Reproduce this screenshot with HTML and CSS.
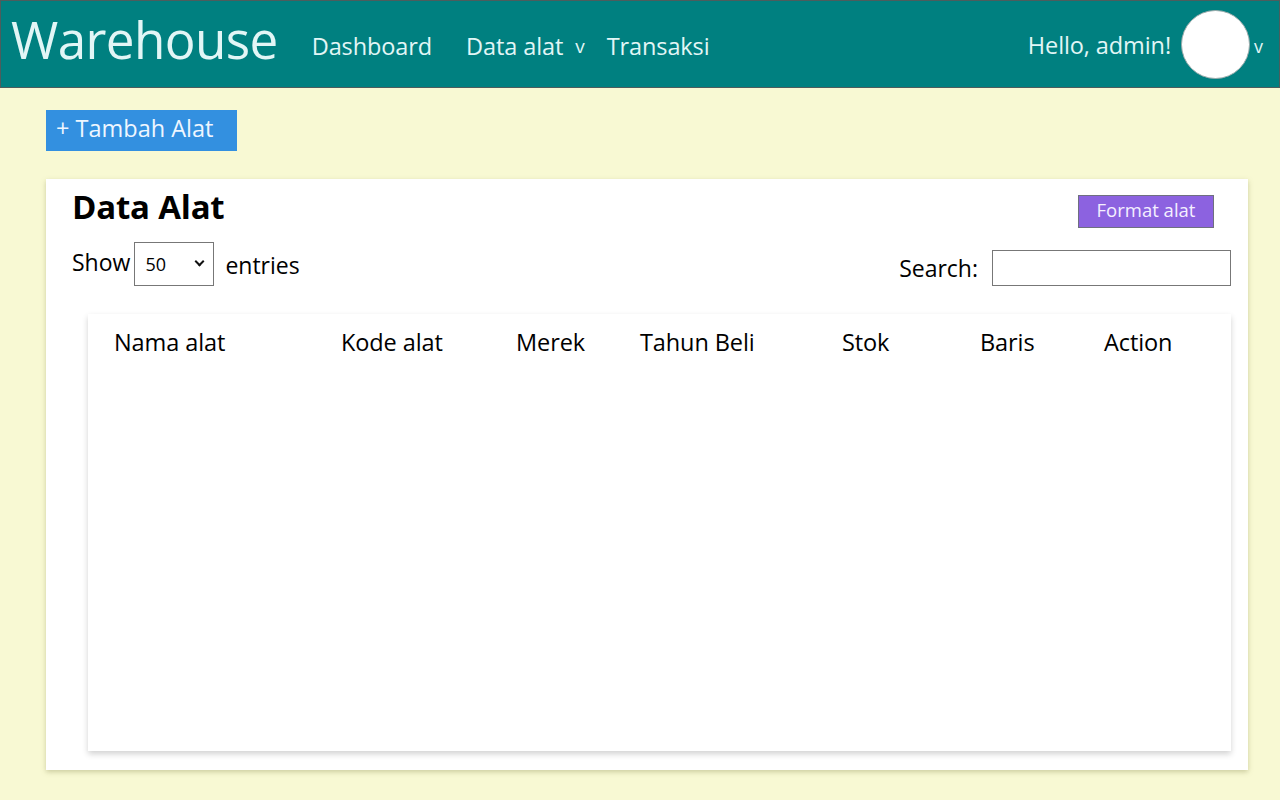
FILE: index.html
```html
<!DOCTYPE html>
<html lang="id">
<head>
<meta charset="utf-8">
<title>Warehouse</title>
<link rel="stylesheet" href="styles.css">
</head>
<body>
<header class="topbar">
  <div class="brand">Warehouse</div>
  <nav class="nav">
    <a class="nav-link" href="#">Dashboard</a>
    <a class="nav-link nav-drop" href="#">Data alat<span class="caret">v</span></a>
    <a class="nav-link" href="#">Transaksi</a>
  </nav>
  <div class="user">
    <span class="hello">Hello, admin!</span>
    <span class="avatar"></span>
    <span class="caret user-caret">v</span>
  </div>
</header>
<main class="page">
  <button class="btn-add">+ Tambah Alat</button>
  <section class="card">
    <div class="card-head">
      <h1 class="title">Data Alat</h1>
      <button class="btn-format">Format alat</button>
    </div>
    <div class="controls">
      <label class="length"><span class="show-label">Show</span>
        <span class="select-wrap"><select class="length-select"><option>50</option></select></span>
        <span class="entries-label">entries</span></label>
      <label class="search">Search: <input class="search-input" type="text"></label>
    </div>
    <div class="table-box">
      <table class="data-table">
        <thead>
          <tr>
            <th>Nama alat</th>
            <th>Kode alat</th>
            <th>Merek</th>
            <th>Tahun Beli</th>
            <th>Stok</th>
            <th>Baris</th>
            <th>Action</th>
          </tr>
        </thead>
        <tbody></tbody>
      </table>
    </div>
  </section>
</main>
</body>
</html>
```
FILE: styles.css
```css
* { box-sizing: border-box; }
body {
  margin: 0;
  background: #f8f9d3;
  font-family: "Segoe UI", "Open Sans", "Noto Sans", sans-serif;
  color: #000;
}
.topbar {
  height: 88px;
  background: #008080;
  border: 1px solid #4d5d5d;
  display: flex;
  align-items: center;
  padding: 0 16px 0 10px;
  color: #e2f6f6;
}
.brand {
  font-size: 51.2px;
  font-weight: 400;
  letter-spacing: -0.6px;
  margin-right: 34px;
  line-height: 1;
  margin-top: -8px;
}
.nav { display: flex; align-items: center; padding-top: 3px; }
.nav-link {
  color: #e2f6f6;
  text-decoration: none;
  font-size: 23.5px;
  letter-spacing: -0.1px;
  margin-right: 34px;
}
.nav-drop { margin-right: 22px; }
.caret { font-size: 19px; margin-left: 12px; position: relative; top: -2px; }
.user { margin-left: auto; display: flex; align-items: center; padding-top: 2px; }
.hello { font-size: 23.5px; letter-spacing: -0.1px; margin-right: 10px; }
.avatar {
  width: 69px;
  height: 69px;
  border-radius: 50%;
  background: #fff;
  border: 1px solid #9aa;
  margin-top: -2px;
}
.user-caret { margin-left: 4px; top: 1px; font-size: 18px; }
.page { padding: 22px 32px 30px 46px; }
.btn-add {
  display: block;
  height: 41px;
  width: 191px;
  background: #3390e0;
  color: #eef6ff;
  border: 0;
  font-family: inherit;
  font-size: 23.5px;
  text-align: left;
  padding: 0 0 6px 10px;
  letter-spacing: 0;
}
.card {
  margin-top: 28px;
  background: #fff;
  height: 591px;
  padding: 0 17px 19px 26px;
  box-shadow: 0 2px 5px rgba(120, 120, 60, 0.35);
  display: flex;
  flex-direction: column;
}
.card-head {
  display: flex;
  justify-content: space-between;
  align-items: flex-start;
  padding-top: 6px;
}
.title {
  margin: 0;
  font-size: 33px;
  font-weight: 700;
  line-height: 44px;
  letter-spacing: -0.2px;
}
.btn-format {
  margin-top: 10px;
  margin-right: 17px;
  width: 136px;
  height: 33px;
  background: #8c62e0;
  color: #f4efff;
  border: 1px solid #6f6f80;
  font-family: inherit;
  font-size: 18.5px;
  padding: 0 0 4px;
}
.controls {
  display: flex;
  justify-content: space-between;
  align-items: flex-end;
  margin-top: 13px;
  font-size: 23px;
}
.length { display: flex; align-items: center; }
.show-label { position: relative; top: -2px; }
.select-wrap { position: relative; margin: 0 11px 0 4px; }
.select-wrap::after {
  content: "";
  position: absolute;
  right: 11px;
  top: 16px;
  width: 5px;
  height: 5px;
  border-right: 2px solid #111;
  border-bottom: 2px solid #111;
  transform: rotate(45deg);
  pointer-events: none;
}
.length-select {
  display: block;
  -webkit-appearance: none;
  appearance: none;
  width: 80px;
  height: 44px;
  border: 1px solid #777;
  border-radius: 0;
  background: #fff;
  font-family: inherit;
  font-size: 18px;
  padding: 0 0 0 10px;
  margin: 0;
  color: #000;
}
.entries-label { position: relative; top: 1px; }
.search { display: flex; align-items: center; gap: 14px; line-height: 1; }
.search-input {
  width: 239px;
  height: 36px;
  border: 1px solid #777;
  margin: 0;
}
.table-box {
  margin: 28px 0 0 16px;
  flex: 1;
  background: #fff;
  box-shadow: 0 3px 6px rgba(0, 0, 0, 0.18);
  padding: 12px 0 0 26px;
}
.data-table {
  border-collapse: collapse;
  table-layout: fixed;
  width: 100%;
}
.data-table th {
  text-align: left;
  font-weight: 400;
  font-size: 23.5px;
  padding: 0;
  line-height: 32px;
  letter-spacing: -0.1px;
}
.data-table th:nth-child(1) { width: 227px; }
.data-table th:nth-child(2) { width: 175px; }
.data-table th:nth-child(3) { width: 124px; }
.data-table th:nth-child(4) { width: 202px; }
.data-table th:nth-child(5) { width: 138px; }
.data-table th:nth-child(6) { width: 124px; }
```
